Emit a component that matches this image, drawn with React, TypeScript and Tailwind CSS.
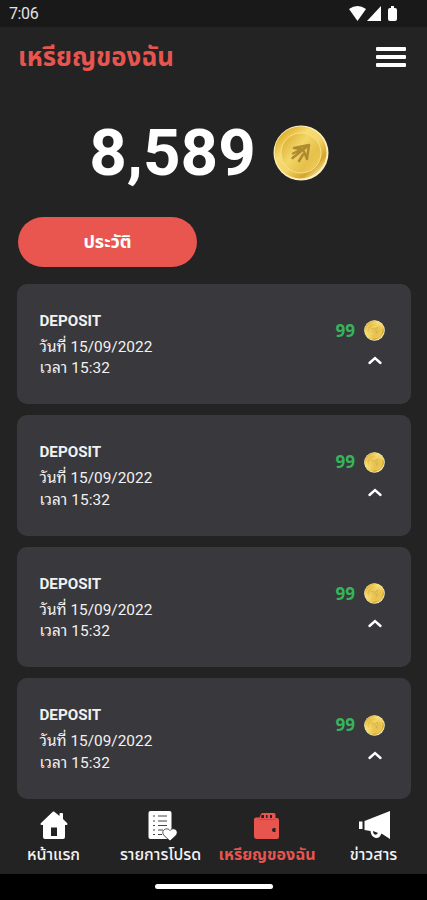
import React from "react";

const thai = "font-['Roboto','Noto_Sans_Thai','Noto_Sans',sans-serif]";
const looped = "font-['Roboto','Noto_Sans_Thai_Looped','Noto_Sans_Thai','Noto_Sans',sans-serif]";

function Coin({ size, id }: { size: number; id: string }) {
  const small = size < 30;
  return (
    <svg width={size} height={size} viewBox="0 0 56 56" className="block shrink-0">
      <defs>
        <linearGradient id={id} x1="0.1" y1="0.1" x2="0.9" y2="0.95">
          <stop offset="0" stopColor="#d9a81f" />
          <stop offset="0.3" stopColor="#f7dc72" />
          <stop offset="0.55" stopColor="#f3d468" />
          <stop offset="0.8" stopColor="#d6a526" />
          <stop offset="1" stopColor="#fdf5cf" />
        </linearGradient>
        <linearGradient id={id + "in"} x1="0" y1="0.1" x2="1" y2="0.9">
          <stop offset="0" stopColor="#d9aa2e" />
          <stop offset="0.4" stopColor="#f3d668" />
          <stop offset="0.7" stopColor="#e6c04a" />
          <stop offset="1" stopColor="#edcc5c" />
        </linearGradient>
      </defs>
      <circle cx="28" cy="28" r="27.5" fill="#fbf0bd" />
      <circle cx="27.5" cy="27.5" r="26" fill={`url(#${id})`} />
      <circle cx="28" cy="28" r="20" fill={`url(#${id}in)`} stroke="#f6e085" strokeWidth="1" />
      <path
        d="M21 23 36 20 34 34 M21 23 30 24.500 M36 20 19.500 33 M34 34 31 26.500 M20 28.500 26 25.500 M26 36 30 29.500"
        fill="none"
        stroke="#a9822c"
        strokeWidth="2.5"
        strokeOpacity={small ? 0.25 : 0.9}
        strokeLinecap="round"
        strokeLinejoin="round"
      />
    </svg>
  );
}

function Card({ index }: { index: number }) {
  return (
    <article className="flex h-[120.5px] shrink-0 justify-between rounded-[10px] bg-[#39383c] pr-[26px] pl-[22.5px]">
      <div className={`pt-[27px] text-[15.4px] text-[#f1f1f2] ${looped}`}>
        <h2 className="h-[26px] text-[15.2px] leading-[21px] font-bold">DEPOSIT</h2>
        <p className="h-[20.5px] leading-[21px] whitespace-nowrap">วันที่ 15/09/2022</p>
        <p className="h-[20.5px] leading-[22px] tracking-[0.1px] whitespace-nowrap">เวลา 15:32</p>
      </div>
      <div className="flex flex-col items-end pt-[36px]">
        <div className="flex h-[22px] items-center gap-[9px]">
          <span className="font-['Noto_Sans',sans-serif] text-[17px] leading-[22px] font-bold text-[#36b45b]">99</span>
          <Coin size={21} id={`coin${index}`} />
        </div>
        <svg width="16" height="10" viewBox="0 0 16 10" className="mt-[13.5px] mr-[2px]">
          <path d="M2.500 8 8 3 13.500 8" fill="none" stroke="#fff" strokeWidth="2.4" strokeLinecap="round" />
        </svg>
      </div>
    </article>
  );
}

function HomeIcon() {
  return (
    <svg width="28" height="29" viewBox="0 0 28 29">
      <path d="M14 0.500 19.500 5V3q0-1 1-1h1.500q1 0 1 1v5l4 4q1.500 2-1 2H25v12q0 2-2 2H5q-2 0-2-2V14H2q-2.500 0-1-2L12 1.500q1-1.500 2-1Z" fill="#fff" />
      <path d="M11 16.500h6V25h-6z" fill="#232324" />
    </svg>
  );
}

function ListIcon() {
  return (
    <svg width="30" height="32" viewBox="0 0 30 32" className="relative left-[2px]">
      <rect x="0.5" y="1" width="23" height="28" rx="2" fill="#fff" />
      <path d="M5 6h2M5 11h2M5 15.500h2M5 20h2M5 24.500h2M10 6h9M10 11h9M10 15.500h9M10 20h5M10 24.500h4" stroke="#444" strokeWidth="1.1" />
      <path d="M22 31 16 25.500c-4-5 3-9 6-5 3-4 10 0 6 5Z" fill="#fff" stroke="#232324" strokeWidth="0.8" />
    </svg>
  );
}

function WalletIcon() {
  return (
    <svg width="26" height="28" viewBox="0 0 26 28">
      <path d="M2 5.500h3.500L7 2q.5-1 2-1h11q1.500 0 1.500 2v3H23q2 0 2 2v17q0 2-2 2H3q-3 0-3-3V7.500q0-2 2-2Z" fill="#e8554f" />
      <path d="M7.500 3h2.500v3H7zM12 3h1.500v3H12zM16 3h2v3h-2z" fill="#232324" />
      <path d="M5 7.500h17" stroke="#b84541" strokeWidth="0.7" />
      <path d="M18 18q0-2 2-2h1.500v4H20q-2 0-2-2Z" fill="#232324" />
    </svg>
  );
}

function HornIcon() {
  return (
    <svg width="32" height="29" viewBox="0 0 32 29" className="relative left-px">
      <path d="M31 0v28L22.500 22.500q-2.500 6-7 4-3.500-1.500-4-6.500l-6-1v-9Z" fill="#fff" />
      <path d="M0 10.500h3.500V18H0z" fill="#fff" />
      <path d="m14 20 5 2q-2 3-4 1-1-.8-1-3Z" fill="#232324" />
    </svg>
  );
}

function NavItem({ icon, label, active = false }: { icon: React.ReactNode; label: string; active?: boolean }) {
  return (
    <div className={active ? "flex flex-col items-center font-bold text-[#e8554f]" : "flex flex-col items-center font-medium text-[#f4f4f4]"}>
      <div className="flex h-[34px] items-center">{icon}</div>
      <span className="text-[16px] leading-[23px] whitespace-nowrap">{label}</span>
    </div>
  );
}

export default function App() {
  return (
    <div className={`flex h-[900px] w-[427px] flex-col overflow-hidden bg-[#232324] text-white ${thai}`}>
      <div className="flex h-[27px] shrink-0 items-center justify-between bg-[#19191a] pr-[28px] pl-[9px]">
        <span className="text-[16px] leading-[28px] tracking-[-0.4px] text-[#e3e3e3]">7:06</span>
        <svg width="50" height="16" viewBox="0 0 50 16" fill="#fff">
          <path d="M0 3Q8.500-3 17 3L8.500 15Z" />
          <path d="M32 0v15H18Z" />
          <path d="M41 2h1V0h3v2h1q2 0 2 2v9q0 2-2 2h-5q-2 0-2-2V4q0-2 2-2Z" />
        </svg>
      </div>
      <header className="flex h-[61px] shrink-0 items-center justify-between pr-[21px] pl-[18px]">
        <h1 className="mt-[-2px] text-[25.7px] leading-[38px] font-bold whitespace-nowrap text-[#e8554f]">เหรียญของฉัน</h1>
        <div className="mt-[-2px] flex w-[30px] flex-col gap-[4px]">
          <div className="h-[4px] rounded-[1px] bg-white" />
          <div className="h-[4px] rounded-[1px] bg-white" />
          <div className="h-[4px] rounded-[1px] bg-white" />
        </div>
      </header>
      <section className="flex h-[129px] shrink-0 items-center justify-center gap-[17px] pr-[9px]">
        <span className="text-[65.5px] leading-[80px] font-bold">8,589</span>
        <Coin size={56} id="coin" />
      </section>
      <button className="ml-[18px] h-[50px] w-[179px] shrink-0 rounded-full bg-[#e8564f] pb-[2px] text-[18px] font-bold">ประวัติ</button>
      <main className="mt-[16.500px] ml-[17px] flex h-[515px] w-[394px] shrink-0 flex-col gap-[11px]">
        {[0, 1, 2, 3].map((i) => (
          <Card key={i} index={i} />
        ))}
      </main>
      <nav className="grid h-[75px] shrink-0 grid-cols-[107px_107px_106px_107px] pt-[10px]">
        <NavItem icon={<HomeIcon />} label="หน้าแรก" />
        <NavItem icon={<ListIcon />} label="รายการโปรด" />
        <NavItem icon={<WalletIcon />} label="เหรียญของฉัน" active />
        <NavItem icon={<HornIcon />} label="ข่าวสาร" />
      </nav>
      <footer className="flex min-h-0 flex-1 items-center justify-center bg-black">
        <div className="h-[5px] w-[118px] rounded-full bg-white" />
      </footer>
    </div>
  );
}
